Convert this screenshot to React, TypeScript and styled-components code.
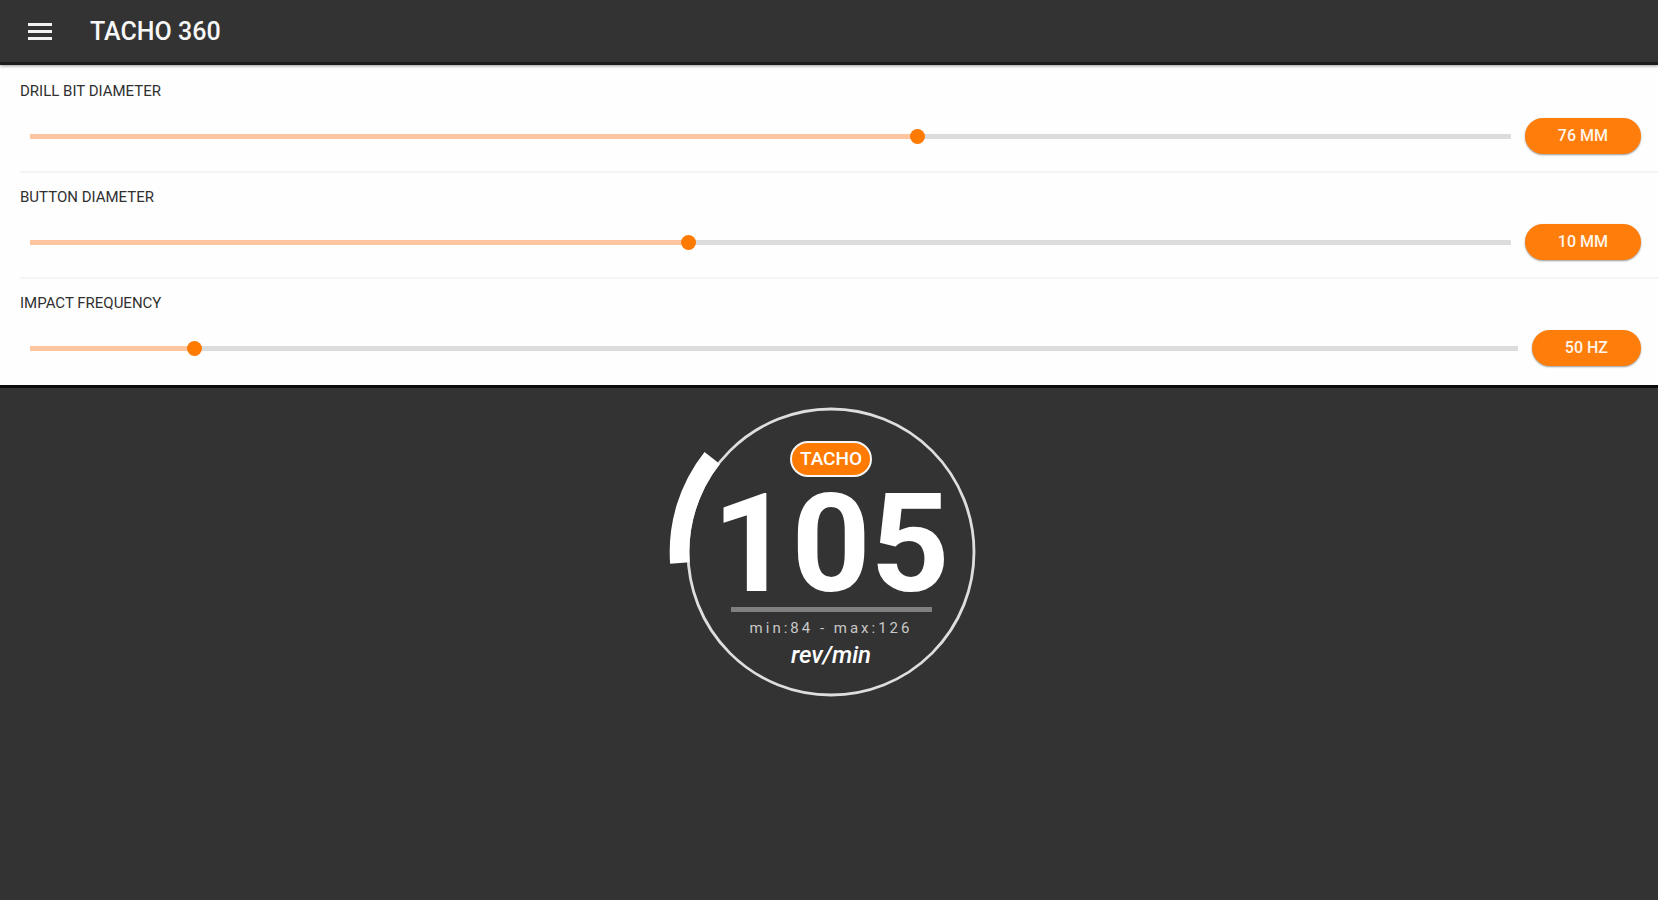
import React, { useState } from "react";
import styled, { createGlobalStyle } from "styled-components";

const GlobalStyle = createGlobalStyle`
  *, *::before, *::after { box-sizing: border-box; }
  body {
    margin: 0;
    background: #333333;
    font-family: Roboto, "Liberation Sans", sans-serif;
  }
`;

const Page = styled.div`
  display: flex;
  flex-direction: column;
  min-height: 100vh;
  background: #333333;
`;

const AppBar = styled.header`
  display: flex;
  align-items: center;
  gap: 34px;
  height: 65px;
  padding: 0 24px;
  border-bottom: 3px solid #1c1c1c;
  box-shadow: 0 1px 3px rgba(0, 0, 0, 0.4);
  position: relative;
`;

const MenuButton = styled.button`
  display: flex;
  padding: 0;
  width: 32px;
  height: 32px;
  align-items: center;
  justify-content: center;
  border: 0;
  background: none;
  color: #f2f2f2;
  cursor: pointer;
`;

const Title = styled.h1`
  margin: 0;
  padding-top: 2px;
  font-size: 25px;
  line-height: 32px;
  font-weight: 500;
  color: #f7f7f7;
`;

const Settings = styled.section`
  background: #fefefe;
  padding: 0 0 2px 20px;
  border-bottom: 3px solid #0c0c0c;
`;

const Setting = styled.div`
  display: flex;
  flex-direction: column;
  gap: 17px;
  padding: 14px 17px 17px 0;
  border-top: 2px solid #f4f4f4;

  &:first-child {
    border-top-color: transparent;
  }
`;

const SettingLabel = styled.label`
  font-size: 15px;
  line-height: 20px;
  color: #303030;
`;

const Controls = styled.div`
  display: flex;
  align-items: center;
  gap: 14px;
  padding-left: 10px;
`;

const Slider = styled.input<{ $fill: number }>`
  --fill: calc(8px + (100% - 15px) * ${(p) => p.$fill});
  appearance: none;
  flex: 1;
  min-width: 0;
  height: 15px;
  margin: 0;
  cursor: pointer;
  background: linear-gradient(to right, #ffc4a0 var(--fill), #dcdcdc var(--fill)) center / 100% 5px no-repeat;

  &::-webkit-slider-thumb {
    appearance: none;
    width: 15px;
    height: 15px;
    border-radius: 50%;
    background: #ff7a00;
  }
`;

const ValueButton = styled.button`
  height: 36px;
  padding: 0 33px;
  border: 0;
  border-radius: 18px;
  background: #ff7d0a;
  box-shadow: 0 1px 2px rgba(0, 0, 0, 0.4);
  color: #fff4ea;
  font-family: inherit;
  font-size: 16px;
  font-weight: 500;
  line-height: 20px;
  cursor: pointer;
`;

const Main = styled.main`
  display: flex;
  justify-content: center;
  padding: 0 16px 0 20px;
`;

const Gauge = styled.div`
  display: grid;
  justify-items: center;
  width: 328px;
`;

const Dial = styled.svg`
  grid-area: 1 / 1;
  width: 328px;
  height: 328px;
`;

const Readout = styled.div`
  grid-area: 1 / 1;
  display: flex;
  flex-direction: column;
  align-items: center;
  padding-top: 53px;
  color: #ffffff;
`;

const Badge = styled.span`
  padding: 0 8px;
  border: 2px solid #f6f6f6;
  border-radius: 18px;
  background: #ff7a00;
  font-size: 19px;
  line-height: 32px;
  font-weight: 500;
`;

const Speed = styled.output`
  padding-top: 4px;
  font-size: 138px;
  line-height: 126px;
  font-weight: 700;
`;

const Divider = styled.hr`
  width: 201px;
  height: 5px;
  margin: 0;
  border: 0;
  background: #808080;
`;

const Range = styled.span`
  padding-top: 4px;
  font-size: 15px;
  line-height: 24px;
  letter-spacing: 3px;
  color: #c8c8c8;
`;

const Unit = styled.span`
  font-size: 24px;
  line-height: 30px;
  font-style: italic;
  font-weight: 500;
`;

type SettingProps = {
  id: string;
  label: string;
  unit: string;
  min: number;
  max: number;
  initial: number;
};

const SETTINGS: SettingProps[] = [
  { id: "bit", label: "DRILL BIT DIAMETER", unit: "MM", min: 40, max: 100, initial: 76 },
  { id: "button", label: "BUTTON DIAMETER", unit: "MM", min: 6, max: 15, initial: 10 },
  { id: "impact", label: "IMPACT FREQUENCY", unit: "HZ", min: 40, max: 134, initial: 50 },
];

function SliderSetting({ id, label, unit, min, max, initial }: SettingProps) {
  const [value, setValue] = useState(initial);
  return (
    <Setting>
      <SettingLabel htmlFor={id}>{label}</SettingLabel>
      <Controls>
        <Slider
          id={id}
          type="range"
          min={min}
          max={max}
          value={value}
          $fill={(value - min) / (max - min)}
          onChange={(e) => setValue(Number(e.target.value))}
        />
        <ValueButton type="button">{`${value} ${unit}`}</ValueButton>
      </Controls>
    </Setting>
  );
}

export default function App() {
  return (
    <>
      <GlobalStyle />
      <Page>
        <AppBar>
          <MenuButton type="button" aria-label="Menu">
            <svg width="24" height="18" viewBox="0 0 24 18" aria-hidden="true">
              <path d="M0 2.5H24M0 9.5H24M0 16.5H24" stroke="currentColor" strokeWidth="3" />
            </svg>
          </MenuButton>
          <Title>TACHO 360</Title>
        </AppBar>
        <Settings>
          {SETTINGS.map((s) => (
            <SliderSetting key={s.id} {...s} />
          ))}
        </Settings>
        <Main>
          <Gauge>
            <Dial viewBox="-164 -164 328 328" aria-hidden="true">
              <circle r="143" fill="none" stroke="#dedede" strokeWidth="2.8" />
              <path d="M-151.1 11A151.5 151.5 0 0 1 -118.8 -94" fill="none" stroke="#ffffff" strokeWidth="19.6" />
            </Dial>
            <Readout>
              <Badge>TACHO</Badge>
              <Speed>105</Speed>
              <Divider />
              <Range>min:84 - max:126</Range>
              <Unit>rev/min</Unit>
            </Readout>
          </Gauge>
        </Main>
      </Page>
    </>
  );
}
